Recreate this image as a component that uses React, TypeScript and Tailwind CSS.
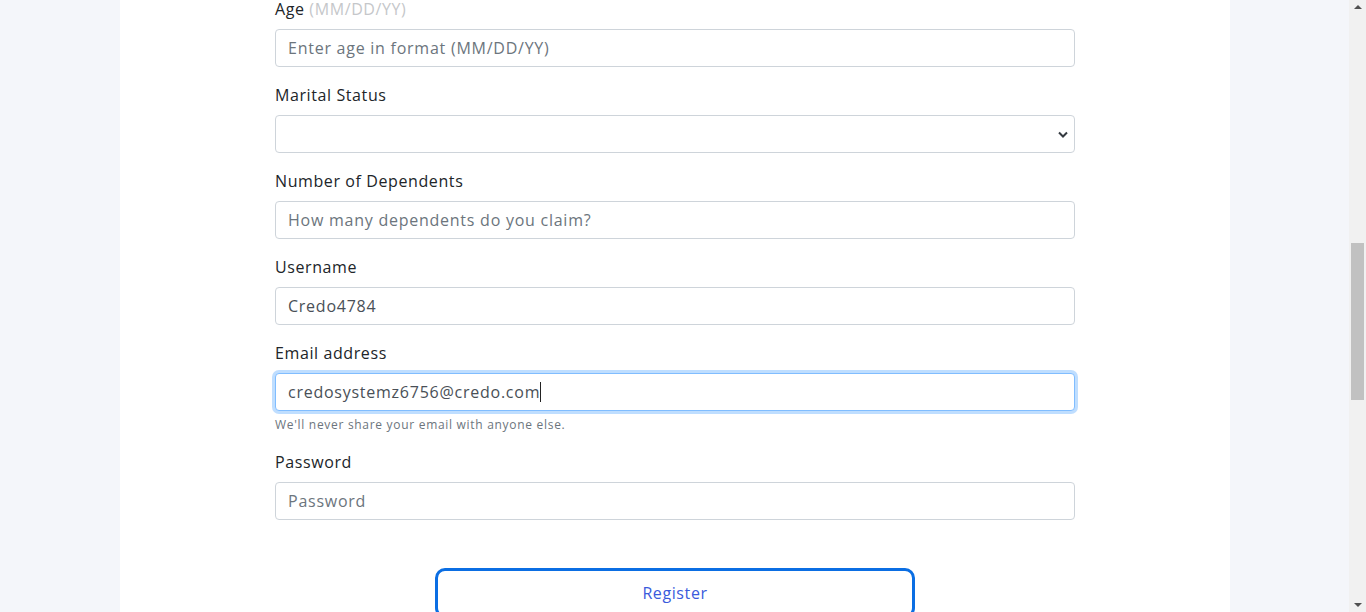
import React from "react";

const font = { fontFamily: '"Open Sans", "Noto Sans", sans-serif' };

function Label({ children }: { children: React.ReactNode }) {
  return (
    <label className="mb-2 block text-[16px] leading-6 tracking-[0.6px] text-[#212529]">{children}</label>
  );
}

function TextInput({ placeholder, value }: { placeholder?: string; value?: string }) {
  return (
    <input
      readOnly
      placeholder={placeholder}
      defaultValue={value}
      className="block h-[38px] w-full rounded-[4px] border border-[#ced4da] bg-white px-3 text-[16px] tracking-[0.75px] text-[#495057] outline-none placeholder:text-[#6c757d]"
      style={font}
    />
  );
}

export default function App() {
  return (
    <div className="flex h-[612px] w-[1366px] overflow-hidden bg-[#f4f6fa]" style={font}>
      <div className="flex flex-1 justify-center">
        <div className="ml-[1px] w-[1110px] bg-white">
          <div className="mx-auto mt-[-3px] w-[800px]">
            <div className="mb-4">
              <Label>
                Age <span className="text-[#c5c7ca]">(MM/DD/YY)</span>
              </Label>
              <TextInput placeholder="Enter age in format (MM/DD/YY)" />
            </div>
            <div className="mb-4">
              <Label>Marital Status</Label>
              <div className="relative flex h-[38px] w-full items-center justify-end rounded-[4px] border border-[#ced4da] bg-white pr-[6px]">
                <svg width="10" height="7" viewBox="0 0 10 7">
                  <path d="M1 1.5 L5 5.5 L9 1.5" fill="none" stroke="#343a40" strokeWidth="2" />
                </svg>
              </div>
            </div>
            <div className="mb-4">
              <Label>Number of Dependents</Label>
              <TextInput placeholder="How many dependents do you claim?" />
            </div>
            <div className="mb-4">
              <Label>Username</Label>
              <TextInput value="Credo4784" />
            </div>
            <div className="mb-4">
              <Label>Email address</Label>
              <div className="flex h-[38px] w-full items-center rounded-[4px] border border-[#80bdff] bg-white px-3 text-[16px] tracking-[0.75px] text-[#495057] shadow-[0_0_0_3px_rgba(0,123,255,0.25)]">
                <span>credosystemz6756@credo.com</span>
                <span className="inline-block h-[20px] w-[1px] bg-[#222]" />
              </div>
              <div className="mt-1 text-[12px] leading-[19px] tracking-[0.7px] text-[#6c757d]">
                We'll never share your email with anyone else.
              </div>
            </div>
            <div className="mb-4">
              <Label>Password</Label>
              <TextInput placeholder="Password" />
            </div>
            <div className="mt-12 flex justify-center">
              <button className="h-[50px] w-[480px] rounded-[10px] border-[3px] border-[#0b6ee3] bg-white text-[16px] tracking-[0.6px] text-[#3a5bdc]">
                Register
              </button>
            </div>
          </div>
        </div>
      </div>
      <div className="relative flex h-full w-[17px] flex-col items-center bg-[#f1f1f1]">
        <div className="mt-[5px] h-0 w-0 border-x-[4px] border-b-[4px] border-x-transparent border-b-[#505050]" />
        <div className="absolute left-[2px] top-[243px] h-[157px] w-[13px] bg-[#c1c1c1]" />
        <div className="absolute bottom-[5px] h-0 w-0 border-x-[4px] border-t-[4px] border-x-transparent border-t-[#505050]" />
      </div>
    </div>
  );
}
